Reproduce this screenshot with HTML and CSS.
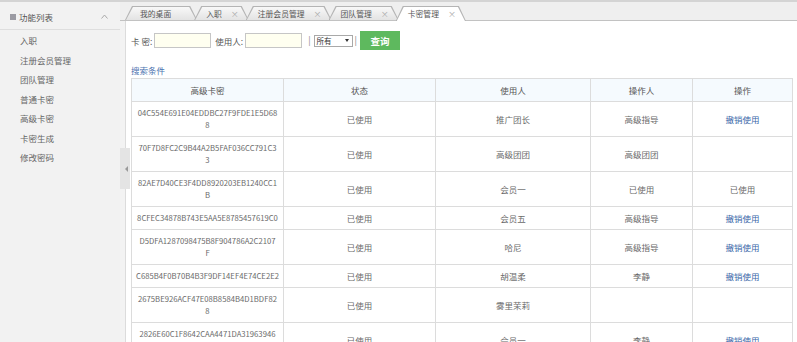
FILE: index.html
```html
<!DOCTYPE html>
<html lang="zh-CN">
<head>
<meta charset="utf-8">
<title>卡密管理</title>
<link rel="stylesheet" href="styles.css">
</head>
<body>
<div class="app">
  <aside class="sidebar">
    <div class="side-head">
      <span class="side-icon"></span>
      <span class="side-title">功能列表</span>
      <svg class="side-caret" width="7" height="5" viewBox="0 0 7 5"><path d="M0.5 4.5 L3.5 1 L6.5 4.5" fill="none" stroke="#aaa" stroke-width="1"/></svg>
    </div>
    <ul class="side-list">
      <li>入职</li>
      <li>注册会员管理</li>
      <li>团队管理</li>
      <li>普通卡密</li>
      <li>高级卡密</li>
      <li>卡密生成</li>
      <li>修改密码</li>
    </ul>
  </aside>
  <div class="toggle"><span class="toggle-arrow"></span></div>
  <main class="main">
    <nav class="tabbar">
      <div class="tab tab-first"><span>我的桌面</span></div>
      <div class="tab"><span>入职</span><i class="close">×</i></div>
      <div class="tab"><span>注册会员管理</span><i class="close">×</i></div>
      <div class="tab"><span>团队管理</span><i class="close">×</i></div>
      <div class="tab active"><span>卡密管理</span><i class="close">×</i></div>
    </nav>
    <section class="content">
      <form class="search">
        <label>卡 密:</label>
        <span class="input"></span>
        <label>使用人:</label>
        <span class="input"></span>
        <span class="sep">|</span>
        <span class="select">所有<i class="select-arrow"></i></span>
        <span class="sep">|</span>
        <span class="btn">查询</span>
      </form>
      <div class="cond">搜索条件</div>
      <table class="grid">
        <colgroup>
          <col class="c-key"><col class="c-state"><col class="c-user"><col class="c-op"><col class="c-act">
        </colgroup>
        <thead>
          <tr><th>高级卡密</th><th>状态</th><th>使用人</th><th>操作人</th><th>操作</th></tr>
        </thead>
        <tbody>
          <tr><td class="key">04C554E691E04EDDBC27F9FDE1E5D68<br>8</td><td>已使用</td><td>推广团长</td><td>高级指导</td><td><a class="link">撤销使用</a></td></tr>
          <tr><td class="key">70F7D8FC2C9B44A2B5FAF036CC791C3<br>3</td><td>已使用</td><td>高级团团</td><td>高级团团</td><td></td></tr>
          <tr><td class="key">82AE7D40CE3F4DD8920203EB1240CC1<br>B</td><td>已使用</td><td>会员一</td><td>已使用</td><td>已使用</td></tr>
          <tr><td class="key">8CFEC34878B743E5AA5E8785457619C0</td><td>已使用</td><td>会员五</td><td>高级指导</td><td><a class="link">撤销使用</a></td></tr>
          <tr><td class="key">D5DFA1287098475B8F904786A2C2107<br>F</td><td>已使用</td><td>哈尼</td><td>高级指导</td><td><a class="link">撤销使用</a></td></tr>
          <tr><td class="key">C685B4F0B70B4B3F9DF14EF4E74CE2E2</td><td>已使用</td><td>胡温柔</td><td>李静</td><td><a class="link">撤销使用</a></td></tr>
          <tr><td class="key">2675BE926ACF47E08B8584B4D1BDF82<br>8</td><td>已使用</td><td>雾里茉莉</td><td></td><td></td></tr>
          <tr><td class="key">2826E60C1F8642CAA4471DA31963946<br>5</td><td>已使用</td><td>会员一</td><td>李静</td><td><a class="link">撤销使用</a></td></tr>
        </tbody>
      </table>
    </section>
  </main>
</div>
</body>
</html>
```
FILE: styles.css
```css
* { box-sizing: border-box; }
html, body { margin: 0; padding: 0; }
body {
  width: 797px;
  height: 342px;
  overflow: hidden;
  background: #fff;
  font-family: "Noto Sans CJK SC", "Noto Sans", "Liberation Sans", sans-serif;
  color: #666;
}
.app {
  position: relative;
  display: flex;
  height: 342px;
}

/* sidebar */
.sidebar {
  flex: none;
  width: 120px;
  background: #f2f2f2;
  border-top: 2px solid #d4d4d4;
}
.side-head {
  display: flex;
  align-items: center;
  height: 28px;
  padding: 2px 10px 0 10px;
  border-bottom: 1px solid #dedede;
  font-size: 8.5px;
  color: #555;
}
.side-icon {
  width: 6px;
  height: 6px;
  background: #9b9ba3;
  margin-right: 3px;
}
.side-title { flex: 1; }
.side-caret { margin-right: 2px; }
.side-list {
  list-style: none;
  margin: 0;
  padding: 1px 0 0 0;
}
.side-list li {
  height: 19.5px;
  line-height: 19.5px;
  padding-left: 20px;
  font-size: 8.5px;
  color: #666;
}

/* collapse toggle overlay */
.toggle {
  position: absolute;
  left: 120px;
  top: 148px;
  width: 10px;
  height: 41px;
  background: #e4e4e4;
  display: flex;
  align-items: center;
  justify-content: flex-end;
  padding-right: 2px;
  z-index: 2;
}
.toggle-arrow {
  width: 0;
  height: 0;
  border-top: 3px solid transparent;
  border-bottom: 3px solid transparent;
  border-right: 3px solid #999;
}

/* main */
.main {
  flex: 1;
  display: flex;
  flex-direction: column;
  background: #f3f3f3;
  min-width: 0;
}
.tabbar {
  flex: none;
  display: flex;
  align-items: flex-end;
  height: 21px;
  border-top: 2px solid #d4d4d4;
  border-bottom: 1px solid #c2c2c2;
  background: #efefef;
  padding-left: 5px;
}
.tab {
  position: relative;
  isolation: isolate;
  display: flex;
  align-items: center;
  gap: 9px;
  height: 15px;
  margin-bottom: -1px;
  margin-right: -3px;
  padding: 0 10px 0 12px;
  font-size: 7.8px;
  color: #555;
  white-space: nowrap;
}
.tab::before,
.tab::after {
  content: "";
  position: absolute;
  z-index: -1;
  clip-path: polygon(7px 0, calc(100% - 7px) 0, 100% 100%, 0 100%);
}
.tab::before {
  inset: 0 0 1px 0;
  background: #b4b4b4;
}
.tab::after {
  inset: 1px 1px 1px 1px;
  background: linear-gradient(#f8f8f8, #e3e3e3);
}
.tab-first { padding: 0 26px 0 15px; }
.tab.active { z-index: 2; }
.tab.active::before { inset: 0; }
.tab.active::after { inset: 1px 1px 0 1px; background: #fff; }
.close {
  font-style: normal;
  font-size: 8px;
  color: #a8a8a8;
}

.content {
  flex: 1;
  margin-left: 5px;
  background: #fff;
  border-left: 1px solid #dcdcdc;
  padding: 10px 0 0 5px;
}

/* search */
.search {
  display: flex;
  align-items: center;
  height: 19px;
  margin: 0;
  font-size: 8.5px;
  color: #555;
}
.search label { margin-right: 2px; }
.input {
  width: 57px;
  height: 15px;
  border: 1px solid #c6c6c6;
  background: #fffff0;
  margin-right: 4px;
}
.sep {
  color: #888;
  margin: 0 3px 0 2px;
  font-size: 9px;
}
.select {
  display: flex;
  align-items: center;
  justify-content: space-between;
  width: 39px;
  height: 12px;
  border: 1px solid #a9a9a9;
  padding: 0 3px 0 2px;
  font-size: 7.5px;
  color: #333;
  background: #fff;
}
.select-arrow {
  width: 0;
  height: 0;
  border-left: 2.5px solid transparent;
  border-right: 2.5px solid transparent;
  border-top: 3px solid #333;
}
.btn {
  display: flex;
  align-items: center;
  justify-content: center;
  width: 40px;
  height: 19px;
  background: #5eb95e;
  color: #fff;
  font-size: 9.5px;
  font-weight: bold;
}

.cond {
  margin-top: 14px;
  line-height: 12px;
  font-size: 8.5px;
  color: #4a73b0;
}

/* table */
.grid {
  margin-top: 2px;
  width: 661px;
  border-collapse: collapse;
  table-layout: fixed;
  font-size: 8.5px;
  color: #6a6a6a;
  background: #fff;
}
.c-key { width: 152px; }
.c-state { width: 152px; }
.c-user { width: 155px; }
.c-op { width: 102px; }
.c-act { width: 100px; }
.grid th,
.grid td {
  border: 1px solid #dcdcdc;
  text-align: center;
  line-height: 12px;
  padding: 5px 3px 5px 3px;
  font-weight: normal;
}
.grid th {
  background: #f5fafe;
  color: #555;
}
.grid td.key {
  font-size: 7.7px;
  white-space: nowrap;
}
.link {
  color: #3766a8;
}
```
